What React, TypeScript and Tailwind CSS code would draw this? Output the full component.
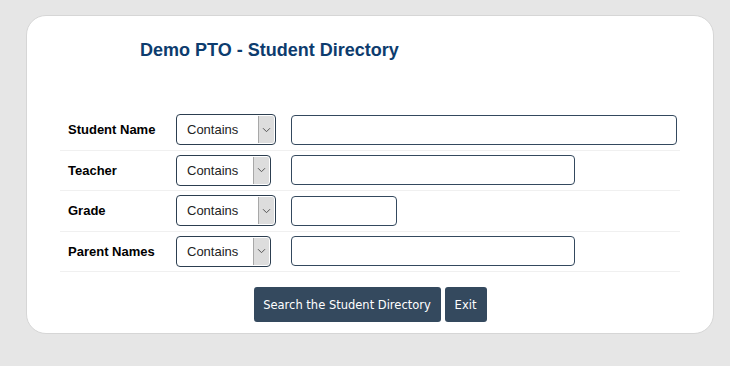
import React from 'react'

interface FieldRow {
  label: string
  selectWidth: string
  inputWidth: string
}

const rows: FieldRow[] = [
  { label: 'Student Name', selectWidth: 'w-[100px]', inputWidth: 'w-[386px]' },
  { label: 'Teacher', selectWidth: 'w-[95px]', inputWidth: 'w-[284px]' },
  { label: 'Grade', selectWidth: 'w-[100px]', inputWidth: 'w-[106px]' },
  { label: 'Parent Names', selectWidth: 'w-[95px]', inputWidth: 'w-[284px]' },
]

function FakeSelect({ width }: { width: string }) {
  return (
    <div
      className={`flex h-[31px] ${width} items-stretch overflow-hidden rounded-[4px] border border-[#2c3e50] bg-white`}
    >
      <span className="flex flex-1 items-center pl-[10px] text-[13px] text-[#222]">Contains</span>
      <span className="m-px flex w-[16px] items-center justify-center rounded-r-[2px] border-l border-[#a8a8a8] bg-[#dddddd]">
        <svg width="9" height="6" viewBox="0 0 9 6" fill="none">
          <path d="M1 1.2l3.5 3.5L8 1.2" stroke="#555" strokeWidth="1" />
        </svg>
      </span>
    </div>
  )
}

export default function App() {
  return (
    <div className="min-h-[366px] bg-[#e6e6e6] pt-[15px] font-['Liberation_Sans',Arial,sans-serif]">
      <div className="ml-[26px] h-[319px] w-[688px] rounded-[20px] border border-[#d6d6d6] bg-white pt-[23px]">
        <h1 className="pl-[113px] text-[18px] font-bold leading-[22px] text-[#0d3c6e]">
          Demo PTO - Student Directory
        </h1>

        <div className="ml-[33px] mt-[49px] w-[620px]">
          {rows.map((row) => (
            <div key={row.label} className="flex h-[40.5px] items-center border-b border-[#f0f0f0]">
              <span className="w-[116px] pl-[8px] text-[13px] font-bold text-black">{row.label}</span>
              <div className="w-[115px]">
                <FakeSelect width={row.selectWidth} />
              </div>
              <input
                type="text"
                className={`h-[30px] ${row.inputWidth} rounded-[4px] border border-[#34495e] bg-white px-2 text-[13px] outline-none`}
              />
            </div>
          ))}
        </div>

        <div className="mt-[15px] flex justify-center gap-[4px]">
          <button className="h-[35px] w-[187px] rounded-[3px] bg-[#34495e] pt-[2px] font-['DejaVu_Sans',sans-serif] text-[11.5px] text-white">
            Search the Student Directory
          </button>
          <button className="h-[35px] w-[42px] rounded-[3px] bg-[#34495e] pt-[2px] font-['DejaVu_Sans',sans-serif] text-[11.5px] text-white">
            Exit
          </button>
        </div>
      </div>
    </div>
  )
}
